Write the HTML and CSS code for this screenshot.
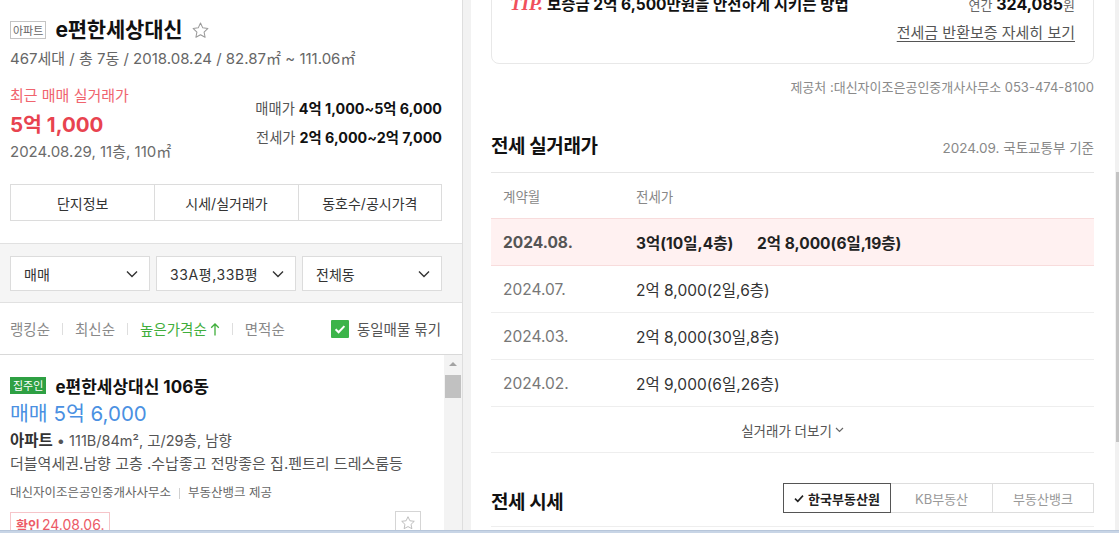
FILE: index.html
```html
<!DOCTYPE html>
<html lang="ko">
<head>
<meta charset="utf-8">
<title>e편한세상대신</title>
<link rel="stylesheet" href="styles.css">
</head>
<body>
<div class="app">
  <div class="main">
    <aside class="left">
      <div class="summary">
        <div class="title-row">
          <span class="type-tag">아파트</span>
          <h1 class="complex-name">e편한세상대신</h1>
          <svg class="fav-star" viewBox="0 0 24 24"><path d="M12 2.6l2.85 6.05 6.55.8-4.85 4.55 1.25 6.55L12 17.35l-5.8 3.2 1.25-6.55L2.6 9.45l6.55-.8z" fill="none" stroke="#9a9a9a" stroke-width="1.3" stroke-linejoin="round"/></svg>
        </div>
        <p class="complex-meta">467세대 / 총 7동 / 2018.08.24 / 82.87㎡ ~ 111.06㎡</p>
        <div class="price-block">
          <div class="recent">
            <div class="recent-label">최근 매매 실거래가</div>
            <div class="recent-price">5억 1,000</div>
            <div class="recent-date">2024.08.29, 11층, 110㎡</div>
          </div>
          <div class="ranges">
            <div class="range"><span class="range-label">매매가</span> <b>4억 1,000~5억 6,000</b></div>
            <div class="range"><span class="range-label">전세가</span> <b>2억 6,000~2억 7,000</b></div>
          </div>
        </div>
        <div class="tabs">
          <div class="tab">단지정보</div>
          <div class="tab">시세/실거래가</div>
          <div class="tab">동호수/공시가격</div>
        </div>
      </div>

      <div class="filters">
        <div class="select"><span>매매</span><svg class="chev" viewBox="0 0 12 8"><path d="M1 1.5l5 5 5-5" fill="none" stroke="#333" stroke-width="1.4"/></svg></div>
        <div class="select"><span class="wide">33A평,33B평</span><svg class="chev" viewBox="0 0 12 8"><path d="M1 1.5l5 5 5-5" fill="none" stroke="#333" stroke-width="1.4"/></svg></div>
        <div class="select"><span>전체동</span><svg class="chev" viewBox="0 0 12 8"><path d="M1 1.5l5 5 5-5" fill="none" stroke="#333" stroke-width="1.4"/></svg></div>
      </div>

      <div class="sort-bar">
        <div class="sorts">
          <span class="sort">랭킹순</span><span class="sort-sep"></span>
          <span class="sort">최신순</span><span class="sort-sep"></span>
          <span class="sort active">높은가격순<svg class="up" viewBox="0 0 10 14"><path d="M5 13.5V2M1.2 5.8L5 2l3.8 3.8" fill="none" stroke="#3fae3b" stroke-width="1.3"/></svg></span><span class="sort-sep"></span>
          <span class="sort">면적순</span>
        </div>
        <div class="group-check">
          <span class="checkbox"><svg viewBox="0 0 18 18"><path d="M4.6 9.3l3 3 5.8-6.2" fill="none" stroke="#fff" stroke-width="2"/></svg></span>
          <span>동일매물 묶기</span>
        </div>
      </div>

      <div class="listing">
        <div class="listing-body">
          <div class="item-title"><span class="owner-tag">집주인</span><span class="item-name">e편한세상대신 106동</span></div>
          <div class="item-price">매매 5억 6,000</div>
          <div class="item-spec"><b>아파트</b> • 111B/84m², 고/29층, 남향</div>
          <div class="item-desc">더블역세권.남향 고층 .수납좋고 전망좋은 집.펜트리 드레스룸등</div>
          <div class="item-agency">대신자이조은공인중개사사무소<span class="agency-sep"></span>부동산뱅크 제공</div>
          <div class="item-foot">
            <span class="confirm"><b>확인</b>24.08.06.</span>
            <span class="star-btn"><svg viewBox="0 0 24 24"><path d="M12 2.6l2.85 6.05 6.55.8-4.85 4.55 1.25 6.55L12 17.35l-5.8 3.2 1.25-6.55L2.6 9.45l6.55-.8z" fill="none" stroke="#b5b5b5" stroke-width="1.3" stroke-linejoin="round"/></svg></span>
          </div>
        </div>
        <div class="list-scroll">
          <div class="scroll-arrow"><span class="tri"></span></div>
          <div class="list-thumb"></div>
        </div>
      </div>
    </aside>

    <div class="gutter"></div>

    <section class="right">
      <div class="tip-card">
        <div class="tip-row">
          <div class="tip-text"><span class="tip-mark">TIP.</span>보증금 2억 6,500만원을 안전하게 지키는 방법</div>
          <div class="tip-fee"><span class="fee-unit">연간</span> <b>324,085</b><span class="fee-unit">원</span></div>
        </div>
        <div class="tip-link-row"><span class="tip-link">전세금 반환보증 자세히 보기</span></div>
      </div>

      <p class="source">제공처 :대신자이조은공인중개사사무소 053-474-8100</p>

      <div class="section-head">
        <h2>전세 실거래가</h2>
        <span class="basis">2024.09. 국토교통부 기준</span>
      </div>

      <div class="deal-table">
        <div class="deal-row head"><span class="c-month">계약월</span><span class="c-price">전세가</span></div>
        <div class="deal-row hot"><span class="c-month">2024.08.</span><span class="c-price"><span class="first">3억(10일,4층)</span><span>2억 8,000(6일,19층)</span></span></div>
        <div class="deal-row"><span class="c-month">2024.07.</span><span class="c-price">2억 8,000(2일,6층)</span></div>
        <div class="deal-row"><span class="c-month">2024.03.</span><span class="c-price">2억 8,000(30일,8층)</span></div>
        <div class="deal-row"><span class="c-month">2024.02.</span><span class="c-price">2억 9,000(6일,26층)</span></div>
      </div>

      <div class="more">실거래가 더보기<svg class="more-chev" viewBox="0 0 9 6"><path d="M1 1l3.5 3.5L8 1" fill="none" stroke="#666" stroke-width="1.2"/></svg></div>

      <div class="market-head">
        <h2>전세 시세</h2>
        <div class="seg">
          <span class="seg-btn on"><svg class="seg-check" viewBox="0 0 10 9"><path d="M1 4.6l2.8 2.8L9 1.6" fill="none" stroke="#222" stroke-width="1.6"/></svg>한국부동산원</span>
          <span class="seg-btn kb">KB부동산</span>
          <span class="seg-btn bank">부동산뱅크</span>
        </div>
      </div>
    </section>

    <div class="page-scroll"><div class="page-thumb"></div></div>
  </div>
  <div class="frame-edge"></div>
</div>
</body>
</html>
```

FILE: styles.css
```css
* { box-sizing: border-box; margin: 0; padding: 0; }

html, body {
  width: 1119px;
  height: 533px;
  overflow: hidden;
  background: #fff;
}

body {
  font-family: "Inter", "Noto Sans CJK KR", sans-serif;
  font-size: 14px;
  color: #222;
}

.app { display: flex; flex-direction: column; height: 533px; }
.main { display: flex; height: 530px; overflow: hidden; }
.frame-edge { height: 3px; background: #c8d5e6; border-top: 1px solid #b7c6da; }

/* ---------- left panel ---------- */
.left {
  width: 463px;
  flex: none;
  border-right: 1px solid #dedede;
  display: flex;
  flex-direction: column;
  overflow: hidden;
}

.summary { padding: 17px 20px 22px 10px; }

.title-row { display: flex; align-items: center; height: 26px; }

.type-tag {
  display: inline-flex;
  align-items: center;
  height: 18px;
  padding: 0 2px;
  border: 1px solid #c4c4c4;
  font-size: 11px;
  color: #666;
}

.complex-name {
  margin-left: 9px;
  font-size: 21px;
  font-weight: 700;
  line-height: 26px;
  color: #111;
  letter-spacing: -0.2px;
}

.fav-star { margin-left: 9px; width: 19px; height: 19px; }

.complex-meta { margin-top: 6px; line-height: 20px; color: #666; font-size: 15px; }

.price-block { margin-top: 17px; display: flex; justify-content: space-between; }

.recent-label { line-height: 20px; color: #f0646e; font-size: 15px; }
.recent-price { line-height: 38px; font-size: 20.5px; font-weight: 700; color: #e8434f; }
.recent-date { line-height: 16px; color: #6b6b6b; font-size: 15px; }

.ranges { padding-top: 8px; text-align: right; }
.range { line-height: 29px; color: #555; font-size: 14.3px; }
.range b { color: #111; font-weight: 700; }

.tabs {
  margin-top: 24px;
  height: 37px;
  display: grid;
  grid-template-columns: repeat(3, 1fr);
  border: 1px solid #dcdcdc;
}
.tab { display: flex; align-items: center; justify-content: center; color: #333; }
.tab + .tab { border-left: 1px solid #dcdcdc; }

.filters {
  border-top: 1px solid #e1e1e1;
  border-bottom: 1px solid #e1e1e1;
  background: #f5f5f5;
  padding: 12px 20px 11px 10px;
  display: grid;
  grid-template-columns: repeat(3, 1fr);
  gap: 6px;
}
.select {
  height: 35px;
  background: #fff;
  border: 1px solid #dcdcdc;
  display: flex;
  align-items: center;
  justify-content: space-between;
  padding: 0 11px 0 13px;
  color: #333;
}
.select .wide { letter-spacing: 0.6px; }
.chev { width: 12px; height: 8px; }

.sort-bar {
  height: 51px;
  display: flex;
  align-items: center;
  justify-content: space-between;
  padding: 0 21px 0 10px;
}
.sorts { display: flex; align-items: center; color: #888; font-size: 14.5px; }
.sort { display: inline-flex; align-items: center; }
.sort.active { color: #3fae3b; }
.up { width: 10px; height: 14px; margin-left: 3px; }
.sort-sep { width: 1px; height: 12px; background: #dedede; margin: 0 12px; }

.group-check { display: flex; align-items: center; color: #555; font-size: 14.5px; }
.checkbox {
  width: 18px;
  height: 18px;
  background: #3cb44a;
  border-radius: 1px;
  margin-right: 8px;
  display: flex;
}
.checkbox svg { width: 18px; height: 18px; }

.listing { flex: 1; min-height: 0; border-top: 1px solid #d9d9d9; display: flex; }
.listing-body { flex: 1; padding: 18px 23px 0 10px; overflow: hidden; }

.item-title { display: flex; align-items: center; height: 24px; }
.owner-tag {
  display: inline-flex;
  align-items: center;
  height: 17px;
  padding: 0 3px;
  background: #2ea043;
  color: #fff;
  font-size: 11px;
}
.item-name { margin-left: 9px; font-size: 17px; font-weight: 700; color: #111; }

.item-price { margin-top: 2px; line-height: 30px; font-size: 20.5px; color: #4a90e2; }
.item-spec { margin-top: 1px; line-height: 22px; color: #555; font-size: 14.5px; }
.item-spec b { font-size: 15.5px; font-weight: 700; color: #333; }
.item-desc { margin-top: 1px; line-height: 22px; color: #555; font-size: 15px; }
.item-agency { margin-top: 8px; line-height: 20px; font-size: 12.5px; color: #666; display: flex; align-items: center; }
.agency-sep { width: 1px; height: 11px; background: #d0d0d0; margin: 0 8px; }

.item-foot { margin-top: 8px; display: flex; justify-content: space-between; align-items: flex-start; }
.confirm {
  margin-top: 1px;
  height: 24px;
  display: inline-flex;
  align-items: center;
  padding: 0 5px;
  border: 1px solid #f6c5c9;
  color: #ec5a66;
}
.confirm b { font-size: 13px; font-weight: 700; margin-right: 2px; }
.star-btn {
  width: 26px;
  height: 24px;
  border: 1px solid #d5d5d5;
  display: flex;
  align-items: center;
  justify-content: center;
}
.star-btn svg { width: 16px; height: 16px; }

.list-scroll { width: 18px; flex: none; background: #f3f3f3; }
.scroll-arrow { height: 17px; display: flex; align-items: center; justify-content: center; }
.tri {
  width: 0;
  height: 0;
  border-left: 4px solid transparent;
  border-right: 4px solid transparent;
  border-bottom: 4px solid #a3a3a3;
}
.list-thumb { margin: 3px 0 0 1px; width: 16px; height: 23px; background: #c1c1c1; }

.gutter { width: 8px; flex: none; background: #f2f2f2; }

/* ---------- right panel ---------- */
.right { flex: 1; min-width: 0; padding: 0 21px 0 20px; overflow: hidden; }

.tip-card {
  margin-top: -22px;
  border: 1px solid #e8e8e8;
  border-radius: 8px;
  padding: 14px 18px 20px 18px;
  background: #fff;
}
.tip-row { display: flex; justify-content: space-between; align-items: baseline; line-height: 22px; }
.tip-text { font-size: 15.5px; font-weight: 700; color: #111; }
.tip-mark {
  font-family: "Liberation Serif", serif;
  font-style: italic;
  font-weight: 700;
  font-size: 19px;
  color: #f0505c;
  margin-right: 4px;
}
.fee-unit { font-size: 13px; color: #666; }
.tip-fee b { font-size: 16px; color: #111; }
.tip-link-row { margin-top: 7px; line-height: 20px; text-align: right; }
.tip-link { color: #555; text-decoration: underline; text-underline-offset: 3px; font-size: 15px; }

.source { margin-top: 13px; line-height: 20px; text-align: right; font-size: 13px; color: #8a8a8a; }

.section-head {
  margin-top: 35px;
  display: flex;
  justify-content: space-between;
  align-items: baseline;
  padding-bottom: 10px;
  border-bottom: 1px solid #e6e6e6;
}
.section-head h2, .market-head h2 {
  font-size: 19px;
  font-weight: 700;
  line-height: 30px;
  color: #111;
  letter-spacing: -0.4px;
}
.basis { font-size: 13.5px; color: #888; }

.deal-row {
  display: flex;
  align-items: center;
  height: 47px;
  border-bottom: 1px solid #eeeeee;
  font-size: 15.5px;
}
.deal-row.head { height: 45px; border-bottom: none; font-size: 13.5px; color: #888; }
.deal-row.hot {
  height: 48px;
  background: #fff1f1;
  border-top: 1px solid #f8dcdc;
  border-bottom: 1px solid #f8dcdc;
  font-weight: 700;
}
.c-month { width: 145px; padding-left: 12px; color: #777; flex: none; }
.c-price { color: #333; display: flex; }
.deal-row.head .c-month, .deal-row.head .c-price { color: #888; }
.deal-row.hot .c-month { color: #555; }
.deal-row.hot .c-price { color: #222; }
.first { width: 121px; }

.more {
  height: 46px;
  border-bottom: 1px solid #eeeeee;
  display: flex;
  align-items: center;
  justify-content: center;
  font-size: 13.5px;
  color: #555;
}
.more-chev { width: 9px; height: 6px; margin-left: 3px; }

.market-head {
  margin-top: 30px;
  padding-bottom: 7px;
  border-bottom: 1px solid #eeeeee;
  display: flex;
  justify-content: space-between;
  align-items: flex-start;
}
.market-head h2 { padding-top: 4px; line-height: 32px; }
.seg { display: flex; }
.seg-btn {
  height: 30px;
  display: flex;
  align-items: center;
  justify-content: center;
  border: 1px solid #dddddd;
  font-size: 13px;
  color: #999;
}
.seg-btn.on { width: 108px; border-color: #555; color: #222; font-weight: 700; }
.seg-btn.kb { width: 102px; border-left: none; }
.seg-btn.bank { width: 101px; border-left: none; }
.seg-check { width: 10px; height: 9px; margin-right: 4px; }

.page-scroll { width: 4px; flex: none; background: #f1f1f1; padding-top: 172px; }
.page-thumb { width: 3px; height: 270px; margin-left: 1px; background: #c3c3c3; }
```
